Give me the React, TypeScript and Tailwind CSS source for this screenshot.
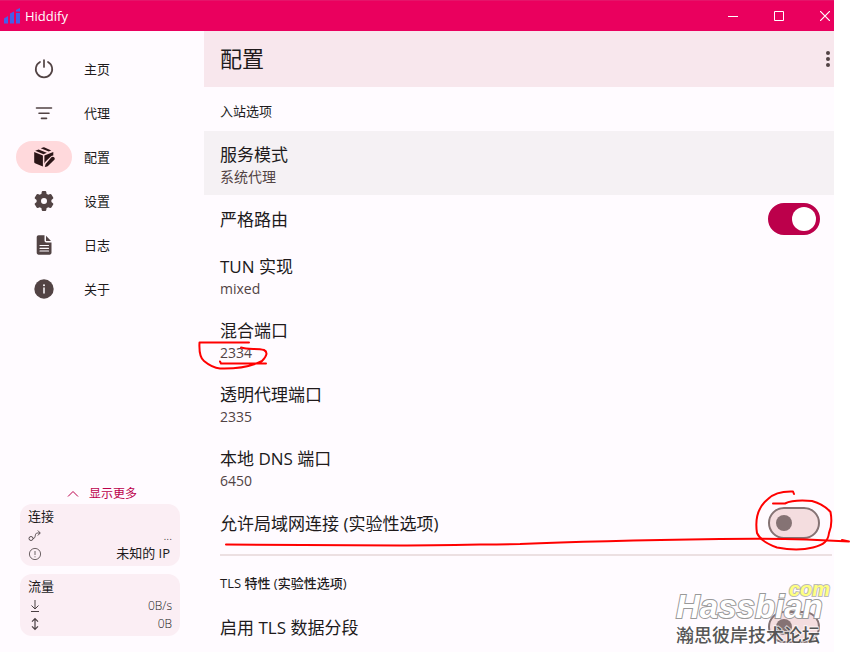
import { useState } from "react";
import type { ReactNode } from "react";

const PowerIcon = () => (
  <svg width="20" height="20" viewBox="0 0 20 20" fill="none" stroke="currentColor" strokeWidth="1.7" strokeLinecap="round">
    <path d="M10 1v7M6 3a8.2 8.2 0 1 0 8 0" />
  </svg>
);

const FilterIcon = () => (
  <svg width="20" height="20" viewBox="0 0 20 20" fill="none" stroke="currentColor" strokeWidth="1.6" strokeLinecap="round">
    <path d="M2.5 5h15M5 10.2h10M7.5 15.4h5" />
  </svg>
);

const BoxEditIcon = () => (
  <svg width="22" height="22" viewBox="0 0 22 22" fill="currentColor">
    <path d="M10 1.4 7.7 2.3l8 3.2 2.6-1-7.2-3.2a1.600 1.600 0 0 0-1.100.1Z" />
    <path d="M5.6 3.4 2.2 4.8l8.3 3.5 3.3-1.5Z" />
    <path d="m1.2 6 8.7 3.6v11L2 17.3a1.3 1.3 0 0 1-.8-1.2Z" />
    <path d="m11.4 9.6 8.9-3.7v3.5c-1 0-1.8.3-2.5 1l-5.2 5.1c-.6.7-1 1.5-1.2 2.3Z" />
    <path d="M18.4 11.3a1.9 1.9 0 0 1 2.7 2.7l-5.6 5.6a3 3 0 0 1-1.3.8l-2.4.7.7-2.6c.1-.5.4-1 .8-1.3Z" />
  </svg>
);

const SettingsIcon = () => (
  <svg width="24" height="24" viewBox="0 0 24 24" fill="currentColor" fillRule="evenodd">
    <path d="M10.7 2h2.6c.5 0 .9.4 1 .9l.3 2c.6.2 1.1.5 1.6.9l1.9-.8c.5-.2 1 0 1.3.4l1.8 3c.3.5.2 1-.3 1.4l-1.5 1.2v2l1.500 1.2c.4.3.6.9.3 1.4l-1.8 3c-.3.4-.8.6-1.3.4l-1.9-.8c-.5.4-1 .7-1.6.9l-.3 2c-.1.5-.5.9-1 .9h-2.6c-.5 0-.9-.4-1-.9l-.3-2c-.6-.2-1.1-.5-1.6-.9l-1.9.8c-.5.2-1 0-1.3-.4l-1.8-3c-.3-.5-.1-1.1.3-1.4L4.600 13v-2L3.1 9.8c-.5-.4-.6-.9-.3-1.4l1.8-3c.3-.4.8-.6 1.3-.4l1.9.8c.5-.4 1-.7 1.6-.9l.3-2c.1-.5.5-.9 1-.9ZM12 9a3 3 0 1 0 0 6 3 3 0 0 0 0-6Z" />
  </svg>
);

const LogIcon = () => (
  <svg width="24" height="24" viewBox="0 0 24 24">
    <path
      fill="currentColor"
      d="M12.500 2.300v5.200c0 1.100.8 2 2 2h5v10.300c0 1.100-.8 1.900-1.900 1.900H6.600c-1.100 0-1.900-.8-1.900-1.900V4.200c0-1.100.8-1.900 1.900-1.900ZM14 2.700 19 8h-4.500a.6.600 0 0 1-.5-.6Z"
    />
    <path stroke="#fffbff" strokeWidth="1.2" strokeLinecap="round" d="M8 12.500h8.500M8 15.300h8.500M8 18h8.500" />
  </svg>
);

const InfoIcon = () => (
  <svg width="20" height="20" viewBox="0 0 20 20">
    <circle cx="10" cy="10" r="9.700" fill="currentColor" />
    <path stroke="#fffbff" strokeWidth="1.500" strokeLinecap="round" d="M10 9v5" />
    <circle cx="10" cy="6.300" r="1" fill="#fffbff" />
  </svg>
);

const navItems = [
  { label: "主页", icon: <PowerIcon /> },
  { label: "代理", icon: <FilterIcon /> },
  { label: "配置", icon: <BoxEditIcon />, active: true },
  { label: "设置", icon: <SettingsIcon /> },
  { label: "日志", icon: <LogIcon /> },
  { label: "关于", icon: <InfoIcon /> },
];

const TitleBar = () => (
  <header className="flex h-[31px] items-center justify-between border-t border-[#e5146a] bg-[#ea005e] pr-1 pb-px pl-1 text-white">
    <div className="flex items-center gap-1">
      <svg width="17" height="16" viewBox="0 0 17 16" fill="#465fe8">
        <path d="M0 10.500 4 8v7.500H0ZM6 5.500 10 3.500v12H6ZM12 5h4v10.500h-4ZM12 2l4-2v3.500h-4Z" />
      </svg>
      <span className="text-[13px] leading-5">Hiddify</span>
    </div>
    <div className="flex items-center gap-9">
      <button aria-label="最小化">
        <svg width="10" height="10" viewBox="0 0 10 10" stroke="currentColor"><path d="M0 5.500h10" /></svg>
      </button>
      <button aria-label="最大化">
        <svg width="10" height="10" viewBox="0 0 10 10" fill="none" stroke="currentColor"><path d="M.5.5h9v9h-9Z" /></svg>
      </button>
      <button aria-label="关闭">
        <svg width="10" height="10" viewBox="0 0 10 10" stroke="currentColor" strokeWidth="1.2"><path d="m0 0 10 10M10 0 0 10" /></svg>
      </button>
    </div>
  </header>
);

const StatCard = ({ title, children }: { title: string; children: ReactNode }) => (
  <section className="rounded-xl bg-[#fbeef4] px-2 py-[3px]">
    <h2 className="mb-0.5 text-[13px] leading-[18px]">{title}</h2>
    {children}
  </section>
);

const StatLine = ({ icon, children }: { icon: ReactNode; children: ReactNode }) => (
  <div className="flex h-[18px] items-center justify-between">
    <span className="flex w-3.5 justify-center text-[#4a4043]">{icon}</span>
    {children}
  </div>
);

const Sidebar = () => (
  <aside className="flex w-[204px] shrink-0 flex-col justify-between pt-[22px] pb-4">
    <nav className="flex flex-col gap-3">
      {navItems.map((item) => (
        <a key={item.label} href="#" className="flex items-center gap-3 pl-4 text-[13px] leading-8">
          <span
            className={`flex h-8 w-14 items-center justify-center rounded-full ${
              item.active ? "bg-[#ffd9dc] text-[#2b1517]" : "text-[#524344]"
            }`}
          >
            {item.icon}
          </span>
          {item.label}
        </a>
      ))}
    </nav>
    <div className="flex flex-col gap-2 pr-6 pl-5 text-xs">
      <button className="-mb-1.5 flex items-center gap-2.5 self-center pl-1 text-[#bc004b]">
        <svg width="12" height="8" viewBox="0 0 12 8" fill="none" stroke="currentColor"><path d="m1 6.500 5-5 5 5" /></svg>
        显示更多
      </button>
      <StatCard title="连接">
        <StatLine
          icon={
            <svg width="14" height="14" viewBox="0 0 14 14" fill="none" stroke="currentColor" strokeWidth="0.9">
              <circle cx="3" cy="9.500" r="2" />
              <path d="M5 9.500c3.500 0 1-5.500 4.500-5.500H12M9.800 1.500 12.300 4 9.800 6.500" />
            </svg>
          }
        >
          <span className="font-light">...</span>
        </StatLine>
        <StatLine
          icon={
            <svg width="14" height="14" viewBox="0 0 14 14" fill="none" stroke="currentColor" strokeWidth="0.8">
              <circle cx="7" cy="7" r="5.600" />
              <path d="M7 4v4M7 9.300v1" />
            </svg>
          }
        >
          <span className="pr-0.5 text-[13px]">未知的 IP</span>
        </StatLine>
      </StatCard>
      <StatCard title="流量">
        <StatLine
          icon={
            <svg width="12" height="14" viewBox="0 0 12 14" fill="none" stroke="currentColor">
              <path d="M6 1v8.500M2.500 6.500 6 10l3.500-3.500M2 12.500h8" />
            </svg>
          }
        >
          <span className="font-light">0B/s</span>
        </StatLine>
        <StatLine
          icon={
            <svg width="12" height="14" viewBox="0 0 12 14" fill="none" stroke="currentColor" strokeWidth="1.2">
              <path d="M6 2v10M3 4.700l3-3 3 3M3 9.300l3 3 3-3" />
            </svg>
          }
        >
          <span className="font-light">0B</span>
        </StatLine>
      </StatCard>
    </div>
  </aside>
);

const OptionRow = ({ title, value, hovered }: { title: string; value: string; hovered?: boolean }) => (
  <button className={`flex h-16 w-full flex-col justify-center px-4 pt-[3px] text-left ${hovered ? "bg-[#f5f1f4]" : ""}`}>
    <span className="text-[17px] leading-6">{title}</span>
    <span className="text-sm leading-5 text-[#524344]">{value}</span>
  </button>
);

const SwitchRow = ({ title, on }: { title: string; on?: boolean }) => {
  const [checked, setChecked] = useState(!!on);
  return (
    <label className="flex h-12 items-center justify-between pr-3.5 pl-4 text-[17px] leading-6">
      <span className="pt-0.5">{title}</span>
      <input
        type="checkbox"
        role="switch"
        checked={checked}
        onChange={(e) => setChecked(e.target.checked)}
        className="flex h-8 w-[52px] shrink-0 appearance-none items-center rounded-full border-2 border-[#857374] bg-[#f4dddf] pl-1.5 before:size-4 before:rounded-full before:bg-[#857374] checked:justify-end checked:border-[#bc004b] checked:bg-[#bc004b] checked:pr-0.5 checked:before:size-6 checked:before:bg-white"
      />
    </label>
  );
};

const Watermark = () => (
  <div className="pointer-events-none absolute top-[579px] left-[676px] w-[154px] select-none">
    <p className="text-right font-['Liberation_Sans',sans-serif] text-xl leading-5 font-bold text-[#ffff80] italic [-webkit-text-stroke:2px_#999999aa] [paint-order:stroke_fill]">
      com
    </p>
    <p className="-mt-2 font-['Liberation_Sans',sans-serif] text-[33px] leading-8 font-bold text-white italic [-webkit-text-stroke:2px_#999999] [paint-order:stroke_fill]">
      Hassbian
    </p>
    <p className="text-lg leading-6 font-medium text-[#555555] [-webkit-text-stroke:2px_#ffffffaa] [paint-order:stroke_fill]">
      瀚思彼岸技术论坛
    </p>
  </div>
);

// Red pen marks over the port and the LAN switch
const PenMarks = () => (
  <svg
    className="pointer-events-none absolute top-0 left-0"
    width="850"
    height="652"
    viewBox="0 0 850 652"
    fill="none"
    stroke="#ff0000"
    strokeWidth="2"
    strokeLinecap="round"
    strokeLinejoin="round"
  >
    <path d="M249 342.500H199.500C199 352 200 358 204 361C210 366 215 368 220 368.500C237 369 252 366 262 361C267 356 268 352 264 350C257 348 248 350 241 347.500M220 361.500L221 363.500H266" />
    <path d="M794 494L793 491.500C780 491 772 495 768 499C758 507 755 520 757 533C760 540 770 545 777 547.500C790 550 803 550 813 547.500C824 545 828 541 829 533C832 526 832 520 830.500 512C826 507 819 503 812 501C800 500 790 501 785 503.500H773" />
    <path d="M226 544.500C300 544.500 350 545.500 400 545.500C440 545.500 480 544.500 520 544C590 541 650 540 720 539C770 538 810 539 849 541.500L842 540" />
  </svg>
);

export default function App() {
  return (
    <div className="relative min-h-screen bg-white pr-4 font-['Open_Sans','Noto_Sans_CJK_SC',sans-serif] text-[#201a1b]">
      <div className="flex min-h-screen flex-col bg-[#fffbff]">
        <TitleBar />
        <div className="flex flex-1">
          <Sidebar />
          <main className="min-w-0 flex-1">
            <div className="flex h-14 items-center justify-between bg-[#f8e7ed] pr-1 pl-4">
              <h1 className="pb-0.5 text-[22px] leading-7">配置</h1>
              <button aria-label="更多选项" className="text-[#524344]">
                <svg width="4" height="16" viewBox="0 0 4 16" fill="currentColor">
                  <circle cx="2" cy="2" r="2" />
                  <circle cx="2" cy="8" r="2" />
                  <circle cx="2" cy="14" r="2" />
                </svg>
              </button>
            </div>
            <h2 className="px-4 pt-1 text-[13px] leading-10">入站选项</h2>
            <OptionRow title="服务模式" value="系统代理" hovered />
            <SwitchRow title="严格路由" on />
            <OptionRow title="TUN 实现" value="mixed" />
            <OptionRow title="混合端口" value="2334" />
            <OptionRow title="透明代理端口" value="2335" />
            <OptionRow title="本地 DNS 端口" value="6450" />
            <SwitchRow title="允许局域网连接 (实验性选项)" />
            <hr className="my-[7px] mr-0.5 ml-4 border-t-2 border-[#ece0e2]" />
            <h2 className="px-4 text-[13px] leading-10 font-medium">TLS 特性 (实验性选项)</h2>
            <SwitchRow title="启用 TLS 数据分段" />
          </main>
        </div>
      </div>
      <Watermark />
      <PenMarks />
    </div>
  );
}
